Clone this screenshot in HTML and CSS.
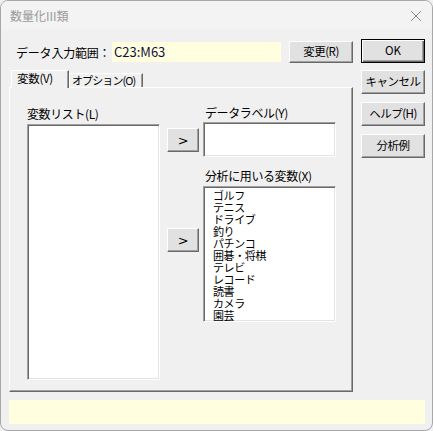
FILE: index.html
```html
<!DOCTYPE html>
<html lang="ja">
<head>
<meta charset="utf-8">
<title>数量化III類</title>
<link rel="stylesheet" href="styles.css">
</head>
<body>
<div class="window">
  <div class="titlebar">
    <span class="title">数量化III類</span>
    <svg class="close" width="12" height="12" viewBox="0 0 12 12"><path d="M1 1 L11 11 M11 1 L1 11" stroke="#8a8a8a" stroke-width="1" fill="none"/></svg>
  </div>
  <div class="main">
    <div class="leftcol">
      <div class="rangerow">
        <span class="rangelabel">データ入力範囲：</span>
        <div class="rangebox">C23:M63</div>
        <button class="btn btn-change">変更(R)</button>
      </div>
      <div class="tabs">
        <div class="tab active">変数(V)</div>
        <div class="tab tab-opt">オプション(O)</div>
      </div>
      <div class="panel">
        <div class="pcol pcol-left">
          <div class="plabel">変数リスト(L)</div>
          <div class="listbox list-vars"></div>
        </div>
        <div class="pcol pcol-mid">
          <button class="btn btn-arrow arrow1">&gt;</button>
          <button class="btn btn-arrow arrow2">&gt;</button>
        </div>
        <div class="pcol pcol-right">
          <div class="plabel">データラベル(Y)</div>
          <div class="listbox textbox"></div>
          <div class="plabel plabel2">分析に用いる変数(X)</div>
          <div class="listbox list-used">
            <div class="item">ゴルフ</div>
            <div class="item">テニス</div>
            <div class="item">ドライブ</div>
            <div class="item">釣り</div>
            <div class="item">パチンコ</div>
            <div class="item">囲碁・将棋</div>
            <div class="item">テレビ</div>
            <div class="item">レコード</div>
            <div class="item">読書</div>
            <div class="item">カメラ</div>
            <div class="item">園芸</div>
          </div>
        </div>
      </div>
    </div>
    <div class="rightcol">
      <button class="btn btn-side btn-ok">OK</button>
      <button class="btn btn-side">キャンセル</button>
      <button class="btn btn-side">ヘルプ(H)</button>
      <button class="btn btn-side">分析例</button>
    </div>
  </div>
  <div class="status"></div>
</div>
</body>
</html>
```
FILE: styles.css
```css
* { box-sizing: border-box; }
html, body { margin: 0; padding: 0; background: #f0f0f0; }
body {
  width: 433px;
  height: 431px;
  font-family: "Noto Sans CJK JP", "Noto Sans", sans-serif;
  font-size: 12px;
  color: #000;
  letter-spacing: -0.4px;
}
.window {
  width: 433px;
  height: 431px;
  border: 1px solid #a8a8a8;
  border-radius: 8px;
  background: #f0f0f0;
  overflow: hidden;
  display: flex;
  flex-direction: column;
}
.titlebar {
  height: 29px;
  background: #f3f3f3;
  display: flex;
  align-items: center;
  justify-content: space-between;
  padding: 0 9px 0 9px;
}
.title { color: #9a9a9a; font-size: 12px; letter-spacing: 0; }
.close { margin-right: 1px; }
.main {
  display: flex;
  height: 362px;
}
.leftcol {
  margin-left: 8px;
  width: 344px;
  display: flex;
  flex-direction: column;
}
.rangerow {
  margin-top: 11px;
  height: 22px;
  display: flex;
  align-items: center;
}
.rangelabel {
  margin-left: 7px;
  width: 96px;
  font-size: 12px;
  white-space: nowrap;
  letter-spacing: -0.2px;
}
.rangebox {
  width: 169px;
  height: 20px;
  background: #ffffe0;
  line-height: 20px;
  padding-left: 2px;
  font-size: 13px;
  letter-spacing: 0;
  color: #10103a;
}
.btn {
  font-family: "Noto Sans CJK JP", "Noto Sans", sans-serif;
  font-size: 11.5px;
  letter-spacing: -0.5px;
  background: #e1e1e1;
  border-top: 1px solid #ffffff;
  border-left: 1px solid #ffffff;
  border-right: 1px solid #696969;
  border-bottom: 1px solid #696969;
  box-shadow: inset -1px -1px 0 #a0a0a0;
  padding: 0;
  color: #000;
  line-height: 1;
  white-space: nowrap;
}
.btn-change {
  margin-left: 8px;
  width: 64px;
  height: 22px;
}
.tabs {
  margin-top: 7px;
  height: 17px;
  display: flex;
  align-items: flex-end;
  position: relative;
  z-index: 1;
}
.tab {
  border-top: 1px solid #ffffff;
  border-left: 1px solid #ffffff;
  border-right: 1px solid #696969;
  box-shadow: inset -1px 0 0 #a0a0a0;
  height: 14px;
  line-height: 13px;
  padding: 0 0 0 3px;
  font-size: 11.5px;
  letter-spacing: -0.3px;
  background: #f0f0f0;
  white-space: nowrap;
  overflow: hidden;
}
.tab.active {
  margin-left: 2px;
  width: 58px;
  height: 18px;
  line-height: 15px;
  margin-bottom: -1px;
  padding-left: 5px;
}
.tab-opt { width: 74px; font-size: 11px; letter-spacing: -0.9px; padding-left: 2px; }
.panel {
  height: 305px;
  border-top: 1px solid #ffffff;
  border-left: 1px solid #ffffff;
  border-right: 1px solid #696969;
  border-bottom: 1px solid #696969;
  box-shadow: inset -1px -1px 0 #a0a0a0;
  display: flex;
  align-items: flex-start;
}
.pcol { display: flex; flex-direction: column; }
.pcol-left { margin-left: 17px; width: 133px; padding-top: 18px; }
.plabel { height: 16px; line-height: 16px; font-size: 12px; white-space: nowrap; }
.listbox {
  background: #ffffff;
  border-top: 1px solid #a0a0a0;
  border-left: 1px solid #a0a0a0;
  border-right: 1px solid #ffffff;
  border-bottom: 1px solid #ffffff;
  box-shadow: inset 1px 1px 0 #696969, inset -1px -1px 0 #e3e3e3;
}
.list-vars { margin-top: 2px; height: 256px; }
.pcol-mid { margin-left: 7px; width: 32px; padding-top: 40px; }
.btn-arrow { width: 32px; height: 24px; font-size: 13px; font-family: "DejaVu Sans", sans-serif; }
.arrow2 { margin-top: 76px; }
.pcol-right { margin-left: 4px; width: 133px; padding-top: 17px; }
.pcol-right .plabel { padding-left: 2px; }
.textbox { margin-top: 1px; height: 35px; }
.plabel2 { margin-top: 11px; }
.list-used { margin-top: 2px; height: 136px; padding: 2px 0 0 9px; overflow: hidden; }
.item { height: 12px; line-height: 12px; font-size: 11px; white-space: nowrap; }
.rightcol {
  margin-left: 8px;
  display: flex;
  flex-direction: column;
  padding-top: 9px;
}
.btn-side { width: 64px; height: 24px; }
.btn-side + .btn-side { margin-top: 8px; }
.btn-ok {
  border: 1px solid #000;
  box-shadow: inset 1px 1px 0 #ffffff, inset -1px -1px 0 #696969, inset -2px -2px 0 #a0a0a0;
  margin-bottom: -1px;
  letter-spacing: 0;
}
.btn-ok + .btn-side { margin-top: 8px; }
.status {
  margin: 8px 0 0 8px;
  width: 416px;
  height: 24px;
  background: #ffffe0;
}
```
